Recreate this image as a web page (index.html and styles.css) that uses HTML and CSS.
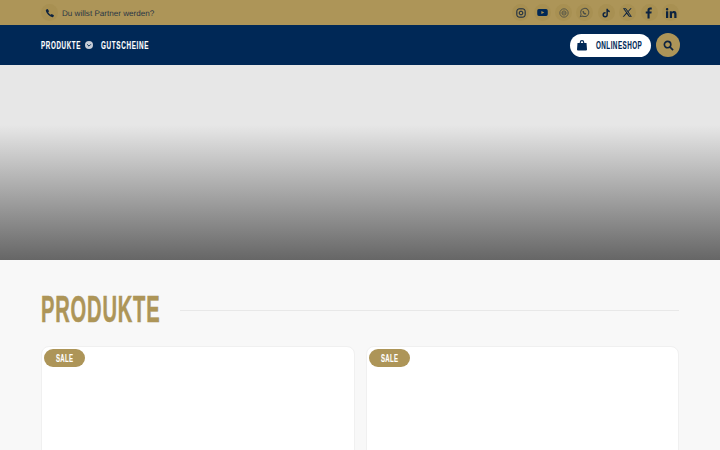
FILE: index.html
```html
<!DOCTYPE html>
<html lang="de">
<head>
    <meta charset="UTF-8">
    <meta name="viewport" content="width=device-width, initial-scale=1.0">
    <title>Produkte</title>
    <link rel="stylesheet" href="styles.css">
</head>
<body>
    <!-- Top bar -->
    <div class="topbar">
        <a class="partner" href="#">
            <span class="round-icon">
                <svg viewBox="0 0 24 24" width="10" height="10"><path fill="#0d2340" d="M6.600 2.500 9.700 8l-2 2c.9 2.400 3.900 5.400 6.300 6.300l2-2 5.500 3.100-1.300 3.500c-.4.900-1.300 1.300-2.200 1.100C10.500 20.500 3.500 13.500 2 6c-.2-.9.2-1.800 1.100-2.200z"/></svg>
            </span>
            <span class="partner-text">Du willst Partner werden?</span>
        </a>
        <div class="socials">
            <span class="round-icon">
                <svg viewBox="0 0 24 24" width="10" height="10" fill="none" stroke="#0d2340" stroke-width="2.400"><rect x="2" y="2" width="20" height="20" rx="5.500"/><circle cx="12" cy="12" r="4.500"/></svg>
            </span>
            <span class="round-icon">
                <svg viewBox="0 0 24 24" width="11" height="11"><path fill="#002856" fill-rule="evenodd" d="M4 4.500h16a3.500 3.500 0 0 1 3.500 3.500v8a3.500 3.500 0 0 1-3.500 3.500H4A3.500 3.500 0 0 1 .5 16V8A3.500 3.500 0 0 1 4 4.500zM9.500 8.500v7l6.500-3.500z"/></svg>
            </span>
            <span class="round-icon faded">
                <svg viewBox="0 0 24 24" width="10" height="10" fill="none" stroke="#0d2340" stroke-width="2"><circle cx="12" cy="12" r="10"/><circle cx="12" cy="12" r="5"/><path d="M8 12h8"/></svg>
            </span>
            <span class="round-icon faded">
                <svg viewBox="0 0 24 24" width="11" height="11" fill="none" stroke="#0d2340" stroke-width="2.200"><path d="M3 21l1.500-5A9 9 0 1 1 8 19.700z"/><path d="M9 8.500c0 3.500 3 6.500 6.500 6.500" stroke-width="2.800"/></svg>
            </span>
            <span class="round-icon">
                <svg viewBox="0 0 24 24" width="10" height="10"><path fill="#0d2340" d="M13 2h3.500c.3 2.600 1.800 4.200 4.500 4.500V10c-1.700 0-3.200-.5-4.500-1.400V16a6.500 6.500 0 1 1-6.500-6.500l1 .1v3.600a3 3 0 1 0 2 2.800z"/></svg>
            </span>
            <span class="round-icon">
                <svg viewBox="0 0 24 24" width="11" height="11"><path fill="#0d2340" d="M2 2.500h6.500l4.600 6.300 5.400-6.300h2.600l-6.900 8 7.500 11h-6.500l-5-7-6 7H1.600l7.400-8.700zm3.700 1.700L17 19.800h1.600L7.400 4.200z"/></svg>
            </span>
            <span class="round-icon">
                <svg viewBox="0 0 24 24" width="12" height="12"><path fill="#0d2340" d="M9 23V13H5.500V9H9V6.500C9 3 11 1 14.200 1c1.500 0 2.800.1 3.300.2v3.600h-2.200c-1.700 0-2.100.8-2.100 2V9h4.200l-.6 4h-3.600v10z"/></svg>
            </span>
            <span class="round-icon">
                <svg viewBox="0 0 24 24" width="12" height="12"><path fill="#0d2340" d="M2 8.500h4.500V22H2zM4.200 2a2.500 2.500 0 1 1 0 5 2.500 2.500 0 0 1 0-5zM9.500 8.500h4.200v1.900c.7-1.200 2.200-2.300 4.300-2.300 4.300 0 5 2.800 5 6.500V22h-4.500v-6.500c0-1.700-.1-3.600-2.200-3.600s-2.300 1.700-2.300 3.500V22H9.500z"/></svg>
            </span>
        </div>
    </div>

    <!-- Navigation -->
    <header class="navbar">
        <nav class="nav-links">
            <a class="nav-link" href="#">
                <span class="narrow nav-produkte">PRODUKTE</span>
                <svg class="chevron" viewBox="0 0 24 24" width="8" height="8"><circle cx="12" cy="12" r="12" fill="#c6ccd6"/><path d="M6.500 10l5.500 5.500 5.500-5.500" fill="none" stroke="#002856" stroke-width="3"/></svg>
            </a>
            <a class="nav-link" href="#"><span class="narrow nav-gutscheine">GUTSCHEINE</span></a>
        </nav>
        <div class="nav-actions">
            <a class="shop-btn" href="#">
                <svg viewBox="0 0 24 24" width="12" height="12"><path fill="#002856" d="M7.500 8V6.500a4.500 4.500 0 0 1 9 0V8H21l1 13a2 2 0 0 1-2 2H4a2 2 0 0 1-2-2L3 8zm2.300 0h4.400V6.500a2.200 2.200 0 0 0-4.400 0z"/></svg>
                <span class="narrow shop-label">ONLINESHOP</span>
            </a>
            <a class="search-btn" href="#">
                <svg viewBox="0 0 24 24" width="11" height="11" fill="none" stroke="#0d2340" stroke-width="3.600"><circle cx="10" cy="10" r="7"/><path d="M15.500 15.500 22 22"/></svg>
            </a>
        </div>
    </header>

    <div class="hero"></div>

    <main class="products">
        <div class="section-head">
            <h2><span class="narrow title-label">PRODUKTE</span></h2>
            <span class="section-line"></span>
        </div>
        <div class="product-grid">
            <div class="product-card"><span class="sale"><span class="narrow sale-label">SALE</span></span></div>
            <div class="product-card"><span class="sale"><span class="narrow sale-label">SALE</span></span></div>
        </div>
    </main>
</body>
</html>
```

FILE: styles.css
```css
html, body {
    height: 100%;
    overflow: hidden;
}

body {
    margin: 0;
    background-color: #f8f8f8;
    font-family: "Liberation Sans", Arial, sans-serif;
}

a {
    color: inherit;
    text-decoration: none;
}

/* No condensed font here, so squeeze the bold sans sideways */
.narrow {
    display: block;
    font-weight: 700;
    white-space: nowrap;
    transform-origin: left center;
    -webkit-text-stroke: 0.15px currentColor;
}

/* Top bar */
.topbar {
    height: 25px;
    padding: 0 41px;
    display: flex;
    align-items: center;
    justify-content: space-between;
    background-color: #ad9558;
}

.partner {
    display: flex;
    align-items: center;
    gap: 4px;
    font-size: 8.100px;
    color: #2a3545;
}

.partner-text {
    text-rendering: geometricPrecision;
    padding-top: 1px;
}

.round-icon {
    width: 17px;
    height: 17px;
    border-radius: 50%;
    background-color: #a89052;
    display: flex;
    align-items: center;
    justify-content: center;
}

.socials {
    display: flex;
    gap: 4.400px;
}

.faded svg {
    opacity: 0.6;
}

/* Navigation */
.navbar {
    height: 40px;
    padding: 0 40px 0 41px;
    display: flex;
    align-items: center;
    justify-content: space-between;
    background-color: #002856;
}

.nav-links {
    display: flex;
    gap: 8px;
}

.nav-link {
    display: flex;
    align-items: center;
    gap: 4px;
    font-size: 11.500px;
    letter-spacing: 1.200px;
    color: #fff;
}

.nav-produkte {
    width: 40px;
    transform: scaleX(0.54);
}

.nav-gutscheine {
    width: 48px;
    transform: scaleX(0.55);
}

.nav-actions {
    display: flex;
    align-items: center;
    gap: 5px;
}

.shop-btn {
    height: 23px;
    width: 81px;
    box-sizing: border-box;
    padding-left: 6px;
    border-radius: 12px;
    background-color: #fff;
    display: flex;
    align-items: center;
    gap: 8px;
    font-size: 11.500px;
    letter-spacing: 0.800px;
    color: #002856;
}

.shop-label {
    width: 46px;
    transform: scaleX(0.55);
}

.search-btn {
    width: 24px;
    height: 24px;
    border-radius: 50%;
    background-color: #ad9558;
    display: flex;
    align-items: center;
    justify-content: center;
}

/* Hero */
.hero {
    height: 195px;
    background: linear-gradient(#e7e7e7 0, #e7e7e7 60px, #666666 100%);
}

/* Produkte */
.products {
    padding: 29px 41px 0;
}

.section-head {
    display: flex;
    align-items: center;
    gap: 21px;
}

.section-head h2 {
    margin: 0;
    width: 118px;
    font-size: 36px;
    line-height: 42px;
    letter-spacing: 1.400px;
    color: #ad9558;
}

.title-label {
    transform: scaleX(0.56);
    -webkit-text-stroke: 0.5px currentColor;
}

.section-line {
    flex: 1;
    height: 1px;
    background-color: #e8e8e8;
}

.product-grid {
    margin-top: 15px;
    display: grid;
    grid-template-columns: 1fr 1fr;
    gap: 11px;
}

.product-card {
    height: 300px;
    padding: 2px;
    background-color: #fff;
    border: 1px solid #f0f0f0;
    border-radius: 8px;
}

.sale {
    width: 41px;
    height: 18px;
    border-radius: 9px;
    background-color: #ad9558;
    display: flex;
    align-items: center;
    justify-content: center;
    font-size: 11px;
    letter-spacing: 0.500px;
    color: #fff;
}

.sale-label {
    width: 17px;
    transform: scaleX(0.55);
}
```
